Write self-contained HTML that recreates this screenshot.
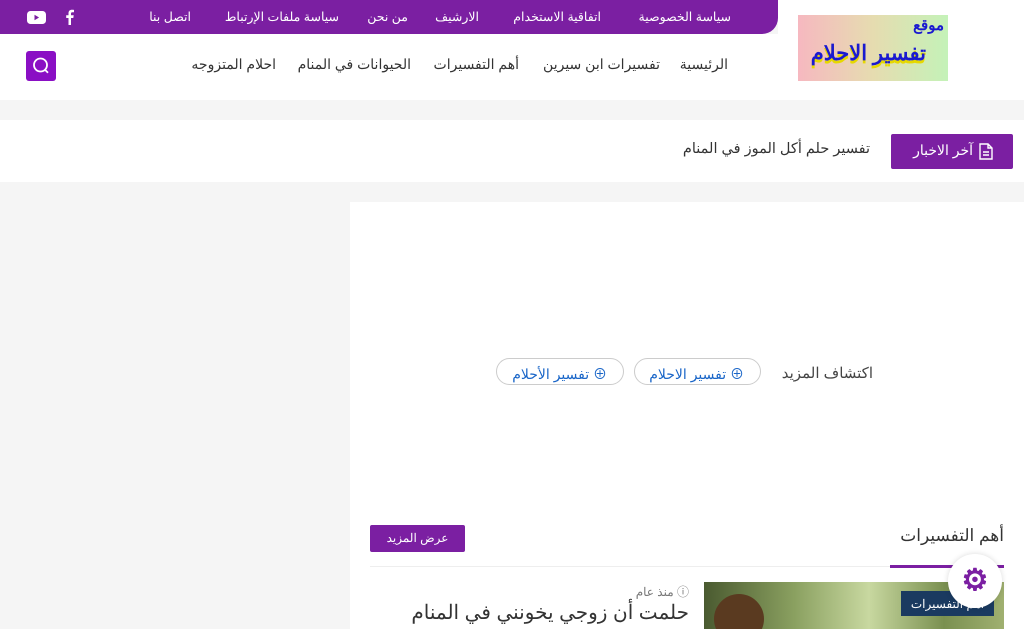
<!DOCTYPE html>
<html dir="rtl"><head><meta charset="utf-8"><style>
*{box-sizing:border-box;margin:0;padding:0}
body{width:1024px;height:629px;overflow:hidden;background:#f5f5f5;font-family:"Liberation Sans","Noto Sans CJK SC",sans-serif;position:relative;color:#333}
.a{position:absolute}
.top{left:0;top:0;width:778px;height:34px;background:#7b1fa2;border-radius:0 0 16px 0}
.top span{position:absolute;top:9px;color:#fff;font-size:12.5px;white-space:nowrap}
.hdr{left:0;top:34px;width:1024px;height:66px;background:#fff}
.hdr0{left:778px;top:0;width:246px;height:34px;background:#fff}
.nav{top:56px;font-size:14px;color:#333;white-space:nowrap}
</style></head><body>
<div class="a hdr0"></div>
<div class="a hdr"></div>
<div class="a top">
<span style="right:47px">سياسة الخصوصية</span>
<span style="right:177px">اتفاقية الاستخدام</span>
<span style="right:299px">الارشيف</span>
<span style="right:370px">من نحن</span>
<span style="right:439px">سياسة ملفات الإرتباط</span>
<span style="right:587px">اتصل بنا</span>
<svg class="a" style="left:64px;top:9px" width="12" height="16" viewBox="0 0 12 16"><path d="M7 16V9h2.3l.4-2.7H7V4.6c0-.8.3-1.3 1.4-1.3H10V.9C9.6.8 8.8.7 7.9.7 5.9.7 4.5 1.9 4.5 4.2v2.1H2.2V9h2.3v7z" fill="#fff"/></svg>
<svg class="a" style="left:27px;top:11px" width="19" height="13" viewBox="0 0 19 13"><rect width="19" height="13" rx="3.5" fill="#fff"/><path d="M7.5 3.8v5.4l4.6-2.7z" fill="#7b1fa2"/></svg>
</div>
<div class="a" style="left:798px;top:15px;width:150px;height:66px;background:linear-gradient(90deg,#f6b8c0,#e6dcb0 50%,#c4f2b8);overflow:hidden">
<div class="a" style="right:4px;top:1px;color:#1a1ad0;font-weight:bold;font-size:15px">موقع</div>
<div class="a" style="right:22px;top:26px;color:#1a1ad0;font-weight:bold;font-size:21px;white-space:nowrap;text-shadow:0 3px 0 #e6d800">تفسير الاحلام</div>
</div>
<div class="a nav" style="right:296px">الرئيسية</div>
<div class="a nav" style="right:364px">تفسيرات ابن سيرين</div>
<div class="a nav" style="right:505px">أهم التفسيرات</div>
<div class="a nav" style="right:613px">الحيوانات في المنام</div>
<div class="a nav" style="right:748px">احلام المتزوجه</div>
<div class="a" style="left:26px;top:51px;width:30px;height:30px;background:#8a0fc4;border-radius:3px">
<svg width="30" height="30" viewBox="0 0 30 30"><circle cx="14.5" cy="14" r="6.5" fill="none" stroke="#fff" stroke-width="1.8"/><path d="M19 18.8l3 3" stroke="#fff" stroke-width="1.8"/></svg></div>
<div class="a" style="left:0;top:120px;width:1024px;height:62px;background:#fff"></div>
<div class="a" style="left:891px;top:134px;width:122px;height:35px;background:#7b1fa2;border-radius:2px;color:#fff;font-size:14px;padding:8px 18px 0 0">
<svg class="a" style="right:20px;top:9px" width="14" height="17" viewBox="0 0 14 17"><path d="M1 1h8l4 4v11H1z M9 1v4h4 M4 9h6 M4 12h6" fill="none" stroke="#fff" stroke-width="1.4"/></svg>
<span style="margin-right:22px">آخر الاخبار</span></div>
<div class="a" style="right:154px;top:141px;font-size:14.5px;color:#333">تفسير حلم أكل الموز في المنام</div>
<div class="a" style="left:350px;top:202px;width:674px;height:427px;background:#fff"></div>
<div class="a" style="right:151px;top:364px;font-size:15px;color:#444">اكتشاف المزيد</div>
<div class="a" style="left:634px;top:358px;width:127px;height:27px;border:1px solid #ccc;border-radius:14px;color:#1a66c8;font-size:14px;padding:5px 16px 0 0">⊕ تفسير الاحلام</div>
<div class="a" style="left:496px;top:358px;width:128px;height:27px;border:1px solid #ccc;border-radius:14px;color:#1a66c8;font-size:14px;padding:5px 16px 0 0">⊕ تفسير الأحلام</div>
<div class="a" style="right:20px;top:526px;font-size:17px;color:#333">أهم التفسيرات</div>
<div class="a" style="left:370px;top:566px;width:634px;height:1px;background:#eee"></div>
<div class="a" style="left:890px;top:565px;width:114px;height:3px;background:#7b1fa2"></div>
<div class="a" style="left:370px;top:525px;width:95px;height:27px;background:#7b1fa2;border-radius:2px;color:#fff;font-size:12px;text-align:center;padding-top:6px">عرض المزيد</div>
<div class="a" style="left:704px;top:582px;width:300px;height:47px;background:linear-gradient(90deg,#4a5a30,#8aa060 30%,#c8d8a0 55%,#7a9050 80%,#a0b070);overflow:hidden">
<div class="a" style="left:10px;top:12px;width:50px;height:50px;border-radius:50%;background:#5a3a20"></div></div>
<div class="a" style="left:901px;top:591px;width:93px;height:25px;background:#1a3a60;color:#fff;font-size:12px;text-align:center;padding-top:6px">أهم التفسيرات</div>
<div class="a" style="right:335px;top:583px;font-size:12px;color:#777">ⓘ منذ عام</div>
<div class="a" style="right:335px;top:600px;font-size:20px;color:#333;white-space:nowrap">حلمت أن زوجي يخونني في المنام</div>
<div class="a" style="left:948px;top:554px;width:54px;height:54px;border-radius:50%;background:#fff;box-shadow:0 0 6px rgba(0,0,0,.15);color:#7b1fa2;font-size:30px;font-weight:bold;text-align:center;line-height:54px">⚙</div>
</body></html>
